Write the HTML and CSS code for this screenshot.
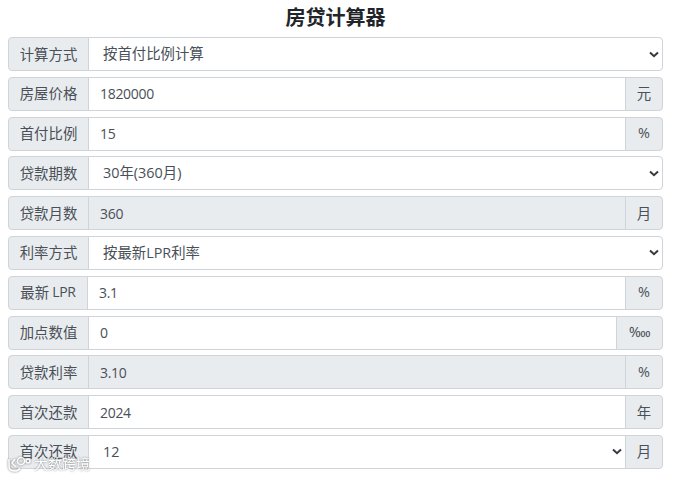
FILE: index.html
```html
<!DOCTYPE html>
<html lang="zh-CN">
<head>
    <meta charset="UTF-8">
    <meta name="viewport" content="width=device-width, initial-scale=1.0">
    <title>房贷计算器</title>
    <link rel="stylesheet" href="styles.css">
</head>
<body>

    <h1>房贷计算器</h1>

    <div class="calc-form">
        <div class="input-row">
            <label class="addon addon-left">计算方式</label>
            <select class="field field-select">
                <option>按首付比例计算</option>
            </select>
        </div>
        <div class="input-row">
            <label class="addon addon-left">房屋价格</label>
            <input class="field" type="text" value="1820000">
            <span class="addon addon-right">元</span>
        </div>
        <div class="input-row">
            <label class="addon addon-left">首付比例</label>
            <input class="field" type="text" value="15">
            <span class="addon addon-right">%</span>
        </div>
        <div class="input-row">
            <label class="addon addon-left">贷款期数</label>
            <select class="field field-select">
                <option>30年(360月)</option>
            </select>
        </div>
        <div class="input-row">
            <label class="addon addon-left">贷款月数</label>
            <input class="field" type="text" value="360" readonly>
            <span class="addon addon-right">月</span>
        </div>
        <div class="input-row">
            <label class="addon addon-left">利率方式</label>
            <select class="field field-select">
                <option>按最新LPR利率</option>
            </select>
        </div>
        <div class="input-row">
            <label class="addon addon-left addon-lpr">最新 <span class="latin">LPR</span></label>
            <input class="field" type="text" value="3.1">
            <span class="addon addon-right">%</span>
        </div>
        <div class="input-row">
            <label class="addon addon-left">加点数值</label>
            <input class="field field-narrow" type="text" value="0">
            <span class="addon addon-right addon-myriad">‱</span>
        </div>
        <div class="input-row">
            <label class="addon addon-left">贷款利率</label>
            <input class="field" type="text" value="3.10" readonly>
            <span class="addon addon-right">%</span>
        </div>
        <div class="input-row">
            <label class="addon addon-left">首次还款</label>
            <input class="field" type="text" value="2024">
            <span class="addon addon-right">年</span>
        </div>
        <div class="input-row">
            <label class="addon addon-left">首次还款</label>
            <select class="field field-select">
                <option>12</option>
            </select>
            <span class="addon addon-right">月</span>
        </div>
    </div>

    <!-- watermark over the last row -->
    <div class="watermark">
        <svg width="24" height="16" viewBox="0 0 24 16" fill="none" stroke="#fff" stroke-width="1.6">
            <path d="M2 3 V10 Q2 15 8 15 Q11 15 13 12"/>
            <path d="M8 3 L5 7 L9 11"/>
            <circle cx="14" cy="5" r="3.5"/>
            <circle cx="21" cy="5" r="2"/>
        </svg>
        <span>大数跨境</span>
    </div>

</body>
</html>
```

FILE: styles.css
```css
* {
    box-sizing: border-box;
}

body {
    font-family: "Open Sans", "Noto Sans CJK SC", sans-serif;
    font-size: 14.4px;
    margin: 0;
    padding: 0 15px 0 8px;
    color: #495057;
    background-color: #fff;
    overflow: hidden;
}

h1 {
    margin: 6px 0 8px;
    height: 23px;
    line-height: 23px;
    font-size: 20px;
    font-weight: 700;
    text-align: center;
    color: #212529;
}

.input-row {
    display: flex;
    height: 34px;
    margin-bottom: 5.8px;
}

.addon {
    display: flex;
    align-items: center;
    justify-content: center;
    padding: 0 0 2px;
    background-color: #e9ecef;
    border: 1px solid #ced4da;
    color: #495057;
    white-space: nowrap;
}

.addon-left {
    width: 81px;
    border-radius: 4px 0 0 4px;
}

.addon-lpr {
    width: 80px;
}

.latin {
    font-size: 14px;
    margin-left: 3px;
    letter-spacing: -0.3px;
}

.addon-right {
    width: 38px;
    margin-left: -1px;
    border-radius: 0 4px 4px 0;
}

.addon-myriad {
    width: 47px;
    font-size: 14px;
}

.field {
    flex: 1;
    min-width: 0;
    margin: 0 0 0 -1px;
    padding: 0 11px;
    font-family: inherit;
    font-size: 14px;
    letter-spacing: -0.3px;
    color: #495057;
    background-color: #fff;
    border: 1px solid #ced4da;
    outline: none;
}

.field:last-child {
    border-radius: 0 4px 4px 0;
}

.field[readonly] {
    background-color: #e9ecef;
}

.field-select {
    padding: 0 8px 1px 14px;
    font-size: 14.4px;
    letter-spacing: 0;
    appearance: none;
    background-image: url("data:image/svg+xml,%3Csvg xmlns='http://www.w3.org/2000/svg' viewBox='0 0 10 7'%3E%3Cpath d='M1 1.5 L5 5.2 L9 1.5' fill='none' stroke='%23343a40' stroke-width='2'/%3E%3C/svg%3E");
    background-repeat: no-repeat;
    background-position: right 3px center;
    background-size: 10px 7px;
}

.watermark {
    position: absolute;
    left: 7px;
    top: 456px;
    display: flex;
    align-items: center;
    gap: 3px;
    font-size: 14px;
    line-height: 16px;
    color: #fff;
    opacity: 0.9;
    text-shadow: 0 0 2px #666;
}

.watermark svg {
    filter: drop-shadow(0 0 1px #666);
}
```
